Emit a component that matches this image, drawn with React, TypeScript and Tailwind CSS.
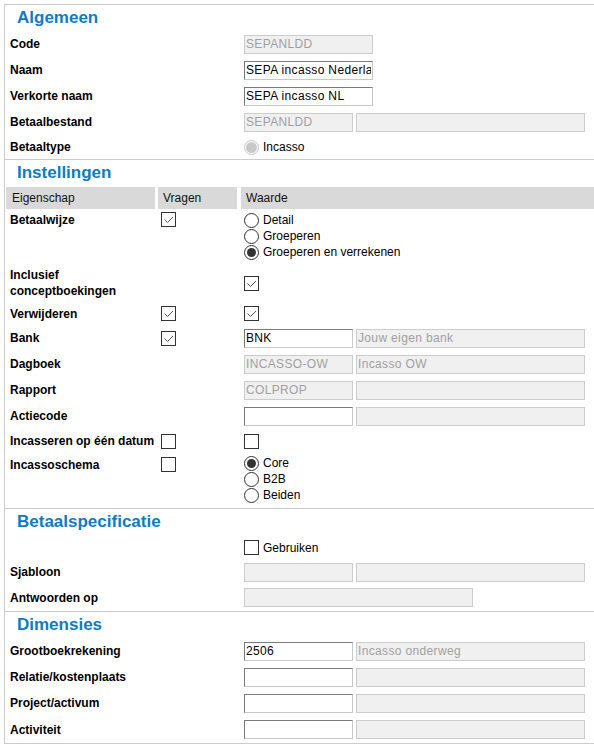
import React from 'react';

const GRID = 'grid grid-cols-[153px_83px_1fr]';
const LABEL = 'pl-[5px] text-[12px] leading-[16px] font-bold text-black';

function Heading({ children }: { children: React.ReactNode }) {
  return (
    <h2 className="pl-[12px] pt-[3px] text-[17px] font-bold leading-[20px] text-[#0e7bc6]">
      {children}
    </h2>
  );
}

function Checkbox({ checked }: { checked?: boolean }) {
  return (
    <span className="flex h-[15px] w-[15px] shrink-0 items-center justify-center border border-[#333333] bg-white">
      {checked && (
        <svg width="13" height="13" viewBox="0 0 13 13">
          <path d="M2.5 6.5 L5.5 9.5 L11 4" fill="none" stroke="#555555" strokeWidth="1" />
        </svg>
      )}
    </span>
  );
}

function Radio({ checked, disabled }: { checked?: boolean; disabled?: boolean }) {
  return (
    <span
      className={`flex h-[15px] w-[15px] shrink-0 items-center justify-center rounded-full border bg-white ${
        disabled ? 'border-[#c4c4c4]' : 'border-[#333333]'
      }`}
    >
      {checked && (
        <span
          className={disabled ? 'h-[11px] w-[11px] rounded-full bg-[#c8c8c8]' : 'h-[9px] w-[9px] rounded-full bg-[#333333]'}
        />
      )}
    </span>
  );
}

function RadioOption({ label, checked, disabled }: { label: string; checked?: boolean; disabled?: boolean }) {
  return (
    <div className="flex h-[16px] items-center gap-[4px]">
      <Radio checked={checked} disabled={disabled} />
      <span className="text-[12px] leading-[16px] text-black">{label}</span>
    </div>
  );
}

function Field({ value = '', w, disabled }: { value?: string; w: string; disabled?: boolean }) {
  return (
    <input
      readOnly
      value={value}
      className={`${w} h-[19px] px-px text-[12px] leading-[17px] tracking-[0.35px] outline-none ${
        disabled
          ? 'border border-[#cccccc] bg-[#f0f0f0] text-[#a0a0a0]'
          : 'border border-t-[#7a7a7a] border-l-[#7a7a7a] border-r-[#c8c8c8] border-b-[#c8c8c8] bg-white text-black'
      }`}
    />
  );
}

function Pair({ code = '', name = '', codeOff }: { code?: string; name?: string; codeOff?: boolean }) {
  return (
    <div className="flex gap-[3px]">
      <Field w="w-[109px]" value={code} disabled={codeOff} />
      <Field w="w-[229px]" value={name} disabled />
    </div>
  );
}

function Row({
  h,
  label,
  ask,
  children,
}: {
  h: string;
  label?: React.ReactNode;
  ask?: React.ReactNode;
  children?: React.ReactNode;
}) {
  return (
    <div className={`${GRID} ${h} items-center`}>
      <div className={LABEL}>{label}</div>
      <div className="pl-[3px]">{ask}</div>
      <div className="pl-[3px]">{children}</div>
    </div>
  );
}

export default function App() {
  return (
    <div className="min-h-screen bg-white pl-[4px] pt-[4px] font-['Liberation_Sans',Arial,sans-serif] text-[12px] text-black">
      <div className="border-b border-l border-[#cccccc]">
        {/* Algemeen */}
        <section className="border-t border-[#cccccc]">
          <Heading>Algemeen</Heading>
          <div className="mt-[3px]">
            <Row h="h-[26px]" label="Code">
              <Field w="w-[129px]" value="SEPANLDD" disabled />
            </Row>
            <Row h="h-[26px]" label="Naam">
              <Field w="w-[129px]" value="SEPA incasso Nederland" />
            </Row>
            <Row h="h-[26px]" label="Verkorte naam">
              <Field w="w-[129px]" value="SEPA incasso NL" />
            </Row>
            <Row h="h-[26px]" label="Betaalbestand">
              <Pair code="SEPANLDD" codeOff />
            </Row>
            <Row h="h-[24px]" label="Betaaltype">
              <RadioOption label="Incasso" checked disabled />
            </Row>
          </div>
        </section>

        {/* Instellingen */}
        <section className="border-t border-[#cccccc]">
          <Heading>Instellingen</Heading>
          <div className={`${GRID} mt-[4px] h-[22px]`}>
            <div className="ml-px flex w-[149px] items-center bg-[#d9d9d9] pl-[6px] text-[#111111]">Eigenschap</div>
            <div className="flex w-[79px] items-center bg-[#d9d9d9] pl-[5px] text-[#111111]">Vragen</div>
            <div className="flex items-center bg-[#d9d9d9] pl-[5px] text-[#111111]">Waarde</div>
          </div>

          <div className={`${GRID} items-start pb-[4px] pt-[3px]`}>
            <div className={LABEL}>Betaalwijze</div>
            <div className="pl-[3px]">
              <Checkbox checked />
            </div>
            <div className="pl-[3px]">
              <RadioOption label="Detail" />
              <RadioOption label="Groeperen" />
              <RadioOption label="Groeperen en verrekenen" checked />
            </div>
          </div>

          <Row
            h="h-[38px]"
            label={
              <>
                Inclusief
                <br />
                conceptboekingen
              </>
            }
          >
            <Checkbox checked />
          </Row>
          <Row h="h-[23px]" label="Verwijderen" ask={<Checkbox checked />}>
            <Checkbox checked />
          </Row>
          <Row h="h-[26px]" label="Bank" ask={<Checkbox checked />}>
            <Pair code="BNK" name="Jouw eigen bank" />
          </Row>
          <Row h="h-[26px]" label="Dagboek">
            <Pair code="INCASSO-OW" name="Incasso OW" codeOff />
          </Row>
          <Row h="h-[26px]" label="Rapport">
            <Pair code="COLPROP" codeOff />
          </Row>
          <Row h="h-[26px]" label="Actiecode">
            <Pair />
          </Row>
          <Row h="h-[24px]" label="Incasseren op één datum" ask={<Checkbox />}>
            <Checkbox />
          </Row>

          <div className={`${GRID} items-start pb-[5px] pt-[2px]`}>
            <div className={`${LABEL} mt-[2px]`}>Incassoschema</div>
            <div className="mt-[2px] pl-[3px]">
              <Checkbox />
            </div>
            <div className="pl-[3px]">
              <RadioOption label="Core" checked />
              <RadioOption label="B2B" />
              <RadioOption label="Beiden" />
            </div>
          </div>
        </section>

        {/* Betaalspecificatie */}
        <section className="border-t border-[#cccccc]">
          <Heading>Betaalspecificatie</Heading>
          <div className="mt-[4px] pb-px">
            <Row h="h-[23px]">
              <div className="flex items-center gap-[4px]">
                <Checkbox />
                <span className="leading-[16px]">Gebruiken</span>
              </div>
            </Row>
            <Row h="h-[26px]" label="Sjabloon">
              <Pair codeOff />
            </Row>
            <Row h="h-[25px]" label="Antwoorden op">
              <Field w="w-[229px]" disabled />
            </Row>
          </div>
        </section>

        {/* Dimensies */}
        <section className="border-t border-[#cccccc]">
          <Heading>Dimensies</Heading>
          <div className="mt-[3px]">
            <Row h="h-[26px]" label="Grootboekrekening">
              <Pair code="2506" name="Incasso onderweg" />
            </Row>
            <Row h="h-[26px]" label="Relatie/kostenplaats">
              <Pair />
            </Row>
            <Row h="h-[26px]" label="Project/activum">
              <Pair />
            </Row>
            <Row h="h-[27px]" label="Activiteit">
              <Pair />
            </Row>
          </div>
        </section>
      </div>
    </div>
  );
}
